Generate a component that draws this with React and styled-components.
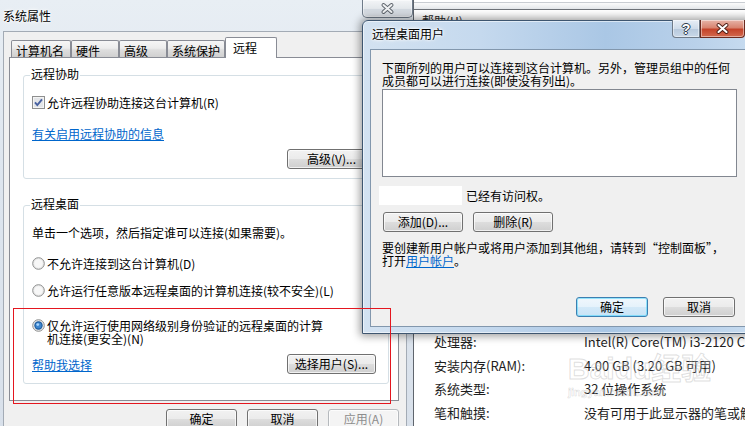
import React from "react";
import styled, { createGlobalStyle } from "styled-components";

const FONT = `"Noto Sans CJK SC", "Noto Sans", sans-serif`;

const GlobalStyle = createGlobalStyle`
  html, body { margin: 0; padding: 0; background: #fff; }
  body { font-family: ${FONT}; font-size: 12px; color: #000; }
  * { box-sizing: border-box; }
`;

const Desktop = styled.div`
  position: relative;
  width: 745px;
  height: 426px;
  overflow: hidden;
  background: #fff;
`;

/* ---------- window behind: system info ---------- */
const InfoWindow = styled.div`
  position: absolute;
  left: 413px;
  top: 0;
  width: 345px;
  height: 426px;
  display: flex;
  flex-direction: column;
  background: #fff;
  border-left: 1px solid #8d9096;
`;

const InfoCaption = styled.div`
  margin-top: 2px;
  height: 8px;
  border-top: 1px solid #c9cdd2;
  border-bottom: 1px solid #6e7278;
  background: linear-gradient(180deg, #fbfbfb, #e4e7ea);
`;

const MenuBar = styled.div`
  padding: 4px 0 0 8px;
  line-height: 13px;
  color: #1e1e1e;
`;

const InfoList = styled.div`
  margin-top: auto;
  padding: 0 0 2px 20px;
`;

const InfoRow = styled.div`
  display: grid;
  grid-template-columns: 150px 1fr;
  height: 23.5px;
  align-items: center;
  font-size: 13px;
  color: #1e1e1e;
  white-space: nowrap;
`;

/* ---------- system properties window ---------- */
const SysWindow = styled.div`
  position: absolute;
  left: -5px;
  top: 0;
  width: 419px;
  height: 450px;
  display: flex;
  flex-direction: column;
  padding: 0 6px 0 8px;
  background: linear-gradient(180deg, #e8eef4 0%, #dde5ee 40%, #d8e0ea 100%);
  border-right: 1px solid #5f656d;
`;

const TitleBar = styled.div`
  height: ${(p) => p.$h}px;
  margin: ${(p) => p.$margin || 0};
  padding: ${(p) => p.$pad};
  display: flex;
  justify-content: space-between;
  align-items: flex-start;
  flex: none;
`;

const WindowTitle = styled.div`
  padding-top: ${(p) => p.$top}px;
  line-height: 13px;
  white-space: nowrap;
  text-shadow: 0 0 5px #fff, 0 0 3px #fff, 0 0 2px #fff;
`;

const CaptionGroup = styled.div`
  display: flex;
  margin-top: ${(p) => p.$top || 0}px;
`;

const CaptionButton = styled.div`
  width: ${(p) => p.$w}px;
  height: 18px;
  display: flex;
  align-items: center;
  justify-content: center;
  border: 1px solid ${(p) => (p.$red ? "#6b2a1f" : "#6f7b89")};
  border-top: none;
  border-radius: ${(p) => p.$radius};
  background: ${(p) =>
    p.$red
      ? "linear-gradient(180deg, #e7b4a8 0%, #d88470 45%, #c4432a 55%, #d2694e 100%)"
      : p.$dim
      ? "linear-gradient(180deg, #f3f5f7 0%, #e3e7eb 50%, #d2d8df 51%, #dde2e8 100%)"
      : "linear-gradient(180deg, #e7eef6 0%, #cfdcea 50%, #b6c8dc 51%, #c9d8e8 100%)"};
  box-shadow: inset 0 0 0 1px rgba(255, 255, 255, 0.45);
`;

const HelpMark = styled.span`
  font: bold 14px/1 "Liberation Sans", sans-serif;
  color: #fff;
  text-shadow: 0 0 1px #2e3c4d, 1px 0 0 #2e3c4d, -1px 0 0 #2e3c4d, 0 1px 0 #2e3c4d,
    0 -1px 0 #2e3c4d;
`;

const Client = styled.div`
  flex: 1;
  display: flex;
  flex-direction: column;
  padding: 5px 7px 0 5px;
  background: #f0f0f0;
  border: 1px solid #a3abb5;
  border-bottom: none;
`;

const TabRow = styled.div`
  position: relative;
  z-index: 1;
  height: 20px;
  display: flex;
  align-items: flex-end;
  padding-left: 2px;
`;

const Tab = styled.div`
  width: ${(p) => p.$w}px;
  height: ${(p) => (p.$active ? 21 : 17)}px;
  margin-bottom: ${(p) => (p.$active ? -1 : 0)}px;
  padding: 3px 0 0 ${(p) => (p.$active ? 7 : 4)}px;
  line-height: 13px;
  white-space: nowrap;
  border: 1px solid #898c95;
  border-bottom: none;
  border-radius: 2px 2px 0 0;
  background: ${(p) =>
    p.$active
      ? "#fff"
      : "linear-gradient(180deg, #f6f6f6 0%, #ececec 45%, #dedede 55%, #d0d0d0 100%)"};
`;

const TabPanel = styled.div`
  display: flex;
  flex-direction: column;
  gap: 26px;
  padding: 17px 9px 16px 13px;
  background: #fff;
  border: 1px solid #898c95;
`;

const GroupBox = styled.div`
  position: relative;
  display: flex;
  flex-direction: column;
  padding: 20px 12px 9px 8px;
  border: 1px solid #d5dfe5;
  border-radius: 3px;
`;

const Legend = styled.span`
  position: absolute;
  top: -9px;
  left: 6px;
  padding: 0 1px;
  line-height: 13px;
  background: #fff;
`;

const Text = styled.div`
  margin-top: ${(p) => p.$mt || 0}px;
  line-height: 13px;
  white-space: nowrap;
`;

const OptionRow = styled.div`
  display: flex;
  align-items: flex-start;
  gap: ${(p) => p.$gap || 2}px;
  margin-top: ${(p) => p.$mt || 0}px;
  line-height: 13px;
  svg {
    flex: none;
    margin-top: ${(p) => p.$iconTop || 0}px;
  }
`;

const OptionLabel = styled.span`
  width: ${(p) => (p.$wrap ? "280px" : "auto")};
  white-space: ${(p) => (p.$wrap ? "normal" : "nowrap")};
`;

const Link = styled.a`
  color: #0066cc;
  text-decoration: underline;
  cursor: pointer;
`;

const ActionRow = styled.div`
  display: flex;
  align-items: center;
  justify-content: ${(p) => p.$justify || "flex-end"};
  gap: ${(p) => p.$gap || 0}px;
  margin-top: ${(p) => p.$mt || 0}px;
  margin-left: ${(p) => p.$ml || 0}px;
  padding-right: ${(p) => p.$pr || 0}px;
  line-height: 13px;
`;

const Button = styled.button`
  width: ${(p) => p.$w}px;
  height: 20px;
  flex: none;
  padding: 0;
  font: 12px/1 ${FONT};
  color: ${(p) => (p.$disabled ? "#8d8d8d" : "#000")};
  border: 1px solid
    ${(p) => (p.$disabled ? "#b5b9bd" : p.$focus ? "#3c7fb1" : "#707070")};
  border-radius: 3px;
  background: ${(p) =>
    p.$disabled
      ? "#f4f4f4"
      : p.$focus
      ? "linear-gradient(180deg, #f0f7fc 0%, #e5f2fb 50%, #d3e9f8 51%, #c8e3f6 100%)"
      : "linear-gradient(180deg, #f2f2f2 0%, #ebebeb 50%, #dddddd 51%, #cfcfcf 100%)"};
  box-shadow: inset 0 0 0 1px
    ${(p) => (p.$focus ? "rgba(72, 214, 251, 0.55)" : "rgba(255, 255, 255, 0.7)")};
`;

const Footer = styled.div`
  display: flex;
  justify-content: flex-end;
  gap: ${(p) => p.$gap}px;
  margin-top: ${(p) => p.$mt};
  padding-right: ${(p) => p.$pr || 0}px;
`;

/* ---------- remote desktop users dialog ---------- */
const Dialog = styled.div`
  position: absolute;
  left: 362px;
  top: 20px;
  width: 394px;
  height: 314px;
  display: flex;
  flex-direction: column;
  border: 1px solid #3e5670;
  border-radius: 6px 6px 0 0;
  background: linear-gradient(
    90deg,
    #d3e2f1 0%,
    #c5d9ee 30%,
    #aac7e5 62%,
    #b9d1ea 85%,
    #c8dcf0 100%
  );
  box-shadow: 0 0 9px 2px rgba(0, 0, 0, 0.4), inset 0 0 0 1px rgba(255, 255, 255, 0.55);
`;

const DialogClient = styled.div`
  flex: 1;
  display: flex;
  flex-direction: column;
  margin: 0 7px 6px 7px;
  padding: 11px 10px 9px 11px;
  background: #f0f0f0;
  border: 1px solid #8297ad;
`;

const UserList = styled.div`
  height: 88px;
  margin-top: 2px;
  background: #fff;
  border: 1px solid #828790;
`;

const AccessRow = styled.div`
  display: flex;
  align-items: center;
  gap: 4px;
  height: 19px;
  margin-top: 9px;
  margin-left: -3px;
  line-height: 13px;
`;

const BlankName = styled.div`
  width: 83px;
  height: 19px;
  background: #fff;
`;

/* ---------- overlays ---------- */
const Annotation = styled.div`
  position: absolute;
  left: 13px;
  top: 308px;
  width: 378px;
  height: 96px;
  border: 1px solid #e4161f;
  pointer-events: none;
`;

const Watermark = styled.div`
  position: absolute;
  left: 568px;
  top: 352px;
  pointer-events: none;
  color: rgba(255, 255, 255, 0.25);
  -webkit-text-stroke: 1px rgba(160, 160, 160, 0.35);
  font: bold 30px/34px "Liberation Sans", ${FONT};
  span {
    display: block;
    font-size: 11px;
    line-height: 12px;
    -webkit-text-stroke: 0.5px rgba(160, 160, 160, 0.4);
  }
`;

const CloseGlyph = ({ fill, edge }) => (
  <svg width="13" height="11" viewBox="0 0 13 11">
    <path d="M2.5 2 L10.5 9 M10.5 2 L2.5 9" stroke={edge} strokeWidth="3.8" strokeLinecap="round" />
    <path d="M2.5 2 L10.5 9 M10.5 2 L2.5 9" stroke={fill} strokeWidth="2.1" strokeLinecap="round" />
  </svg>
);

const CheckBox = () => (
  <svg width="13" height="13" viewBox="0 0 13 13">
    <rect x="0.5" y="0.5" width="12" height="12" fill="#f4f4f4" stroke="#8e8f8f" />
    <rect x="2" y="2" width="9" height="9" fill="#e3e5e8" />
    <path d="M3 6.3 L5.3 9 L10 3.3" fill="none" stroke="#4760a0" strokeWidth="1.9" />
  </svg>
);

const Radio = ({ checked }) => (
  <svg width="13" height="13" viewBox="0 0 13 13">
    <circle cx="6.5" cy="6.5" r="5.8" fill="#e9e9e9" stroke="#8e8f8f" strokeWidth="1" />
    <circle cx="6.5" cy="6.5" r="4.2" fill={checked ? "#1f5d9f" : "#f7f7f7"} />
    {checked && <circle cx="6.5" cy="6.5" r="3" fill="#3d86cf" />}
    {checked && <circle cx="5.8" cy="5.6" r="1.4" fill="#a9d6ff" />}
  </svg>
);

const App = () => {
  return (
    <>
      <GlobalStyle />
      <Desktop>
        <InfoWindow>
          <InfoCaption />
          <MenuBar>帮助(H)</MenuBar>
          <InfoList>
            <InfoRow>
              <span>处理器:</span>
              <span>Intel(R) Core(TM) i3-2120 CPU @ 3.30GHz</span>
            </InfoRow>
            <InfoRow>
              <span>安装内存(RAM):</span>
              <span>4.00 GB (3.20 GB 可用)</span>
            </InfoRow>
            <InfoRow>
              <span>系统类型:</span>
              <span>32 位操作系统</span>
            </InfoRow>
            <InfoRow>
              <span>笔和触摸:</span>
              <span>没有可用于此显示器的笔或触控输入</span>
            </InfoRow>
          </InfoList>
        </InfoWindow>

        <SysWindow>
          <TitleBar $h={31} $margin="0 -6px 0 -8px" $pad="0 0 0 8px">
            <WindowTitle $top={9}>系统属性</WindowTitle>
            <CaptionButton $w={51} $dim $radius="0 0 5px 5px">
              <CloseGlyph fill="#eef0f2" edge="#5b6169" />
            </CaptionButton>
          </TitleBar>
          <Client>
            <TabRow>
              <Tab $w={60}>计算机名</Tab>
              <Tab $w={48}>硬件</Tab>
              <Tab $w={48}>高级</Tab>
              <Tab $w={58}>系统保护</Tab>
              <Tab $w={52} $active>
                远程
              </Tab>
            </TabRow>
            <TabPanel>
              <GroupBox>
                <Legend>远程协助</Legend>
                <OptionRow $gap={2}>
                  <CheckBox />
                  <OptionLabel>允许远程协助连接这台计算机(R)</OptionLabel>
                </OptionRow>
                <Text $mt={18}>
                  <Link>有关启用远程协助的信息</Link>
                </Text>
                <ActionRow $mt={9}>
                  <Button $w={89}>高级(V)...</Button>
                </ActionRow>
              </GroupBox>

              <GroupBox>
                <Legend>远程桌面</Legend>
                <Text>单击一个选项，然后指定谁可以连接(如果需要)。</Text>
                <OptionRow $mt={18} $gap={2}>
                  <Radio />
                  <OptionLabel>不允许连接到这台计算机(D)</OptionLabel>
                </OptionRow>
                <OptionRow $mt={14} $gap={2}>
                  <Radio />
                  <OptionLabel>允许运行任意版本远程桌面的计算机连接(较不安全)(L)</OptionLabel>
                </OptionRow>
                <OptionRow $mt={22} $gap={2}>
                  <Radio checked />
                  <OptionLabel $wrap>
                    仅允许运行使用网络级别身份验证的远程桌面的计算机连接(更安全)(N)
                  </OptionLabel>
                </OptionRow>
                <ActionRow $mt={9} $justify="space-between">
                  <Link>帮助我选择</Link>
                  <Button $w={89}>选择用户(S)...</Button>
                </ActionRow>
              </GroupBox>
            </TabPanel>
            <Footer $gap={10} $mt="8px">
              <Button $w={71}>确定</Button>
              <Button $w={71}>取消</Button>
              <Button $w={71} $disabled>
                应用(A)
              </Button>
            </Footer>
          </Client>
        </SysWindow>

        <Dialog>
          <TitleBar $h={28} $pad="0 10px 0 9px">
            <WindowTitle $top={6}>远程桌面用户</WindowTitle>
            <CaptionGroup $top={-1}>
              <CaptionButton $w={28} $radius="0 0 0 4px">
                <HelpMark>?</HelpMark>
              </CaptionButton>
              <CaptionButton $w={45} $red $radius="0 0 4px 0">
                <CloseGlyph fill="#ffffff" edge="#4a1c14" />
              </CaptionButton>
            </CaptionGroup>
          </TitleBar>
          <DialogClient>
            <Text>
              下面所列的用户可以连接到这台计算机。另外，管理员组中的任何
              <br />
              成员都可以进行连接(即使没有列出)。
            </Text>
            <UserList />
            <AccessRow>
              <BlankName />
              <span>已经有访问权。</span>
            </AccessRow>
            <ActionRow $mt={7} $ml={1} $gap={10} $justify="flex-start">
              <Button $w={80}>添加(D)...</Button>
              <Button $w={80}>删除(R)</Button>
            </ActionRow>
            <Text $mt={9}>
              要创建新用户帐户或将用户添加到其他组，请转到“控制面板”，
              <br />
              打开<Link>用户帐户</Link>。
            </Text>
            <Footer $gap={15} $mt="auto" $pr={2}>
              <Button $w={72} $focus>
                确定
              </Button>
              <Button $w={72}>取消</Button>
            </Footer>
          </DialogClient>
        </Dialog>

        <Watermark>
          Baidu经验
          <span>jingyan.baidu.com</span>
        </Watermark>
        <Annotation />
      </Desktop>
    </>
  );
};

export default App;
